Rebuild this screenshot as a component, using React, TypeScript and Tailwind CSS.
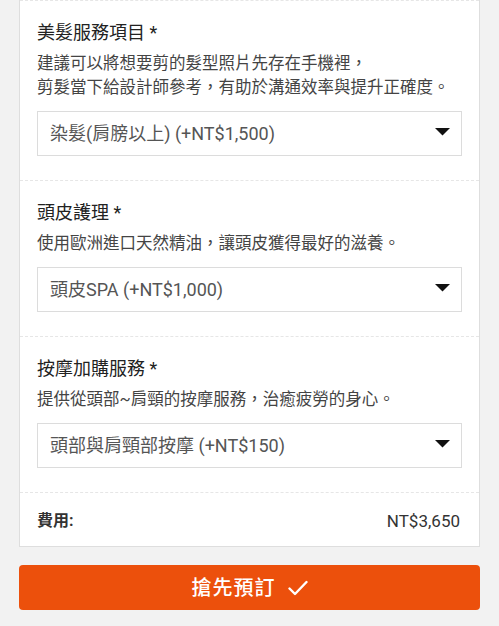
import { useState } from "react";

type Field = {
  title: string;
  desc: string[];
  options: string[];
};

const fields: Field[] = [
  {
    title: "美髮服務項目",
    desc: ["建議可以將想要剪的髮型照片先存在手機裡，", "剪髮當下給設計師參考，有助於溝通效率與提升正確度。"],
    options: ["染髮(肩膀以上) (+NT$1,500)", "染髮(肩膀以下) (+NT$2,000)", "剪髮 (+NT$600)"],
  },
  {
    title: "頭皮護理",
    desc: ["使用歐洲進口天然精油，讓頭皮獲得最好的滋養。"],
    options: ["頭皮SPA (+NT$1,000)", "不需要"],
  },
  {
    title: "按摩加購服務",
    desc: ["提供從頭部~肩頸的按摩服務，治癒疲勞的身心。"],
    options: ["頭部與肩頸部按摩 (+NT$150)", "不需要"],
  },
];

function Caret() {
  return (
    <svg width="15" height="8" viewBox="0 0 15 8" className="pointer-events-none absolute right-[12px] top-[17px]">
      <path d="M0 0 H15 L7.5 7.5 Z" fill="#111" />
    </svg>
  );
}

function Section({ field, first }: { field: Field; first?: boolean }) {
  const [value, setValue] = useState(field.options[0]);
  return (
    <div
      className={`${first ? "border-t border-dashed border-t-[#e6e6e6]" : ""} border-b border-dashed border-b-[#e6e6e6] px-[17px] pt-[18px] pb-6`}
    >
      <div className="text-[18px] leading-[27px] text-[#222] mb-[6px]">
        {field.title} <span>*</span>
      </div>
      <div className="text-[16.5px] leading-[24px] text-[#444]">
        {field.desc.map((d) => (
          <div key={d}>{d}</div>
        ))}
      </div>
      <div className="relative mt-[11px] w-[425px]">
        <select
          value={value}
          onChange={(e) => setValue(e.target.value)}
          className="appearance-none w-full h-[45px] border border-[#dcdcdc] bg-white pl-[12px] pr-10 text-[18px] text-[#555] outline-none rounded-none"
        >
          {field.options.map((o) => (
            <option key={o}>{o}</option>
          ))}
        </select>
        <Caret />
      </div>
    </div>
  );
}

export default function App() {
  return (
    <div
      className="min-h-[626px] bg-[#f2f2f2] px-[19px] pb-4"
      style={{ fontFamily: '"Roboto", "Noto Sans CJK TC", sans-serif' }}
    >
      <div className="bg-white border-x border-b border-[#dedede]">
        {fields.map((f, i) => (
          <Section key={f.title} field={f} first={i === 0} />
        ))}
        {/* total */}
        <div className="flex items-center justify-between px-[17px] pt-[18px] pb-[15px] leading-[20px] text-[#333]">
          <span className="text-[16px] font-bold">費用:</span>
          <span className="text-[17px] pr-[2px]">NT$3,650</span>
        </div>
      </div>

      <button className="mt-[18px] w-full h-[45px] rounded-[4px] bg-[#ec500c] text-white text-[20px] font-medium flex items-center justify-center gap-[12px]">
        <span className="tracking-[1px]">搶先預訂</span>
        <svg width="20" height="16" viewBox="0 0 20 16" fill="none">
          <path d="M1.5 8.5 L7 14 L18.5 2" stroke="#fff" strokeWidth="2.4" strokeLinecap="round" strokeLinejoin="round" />
        </svg>
      </button>
    </div>
  );
}
